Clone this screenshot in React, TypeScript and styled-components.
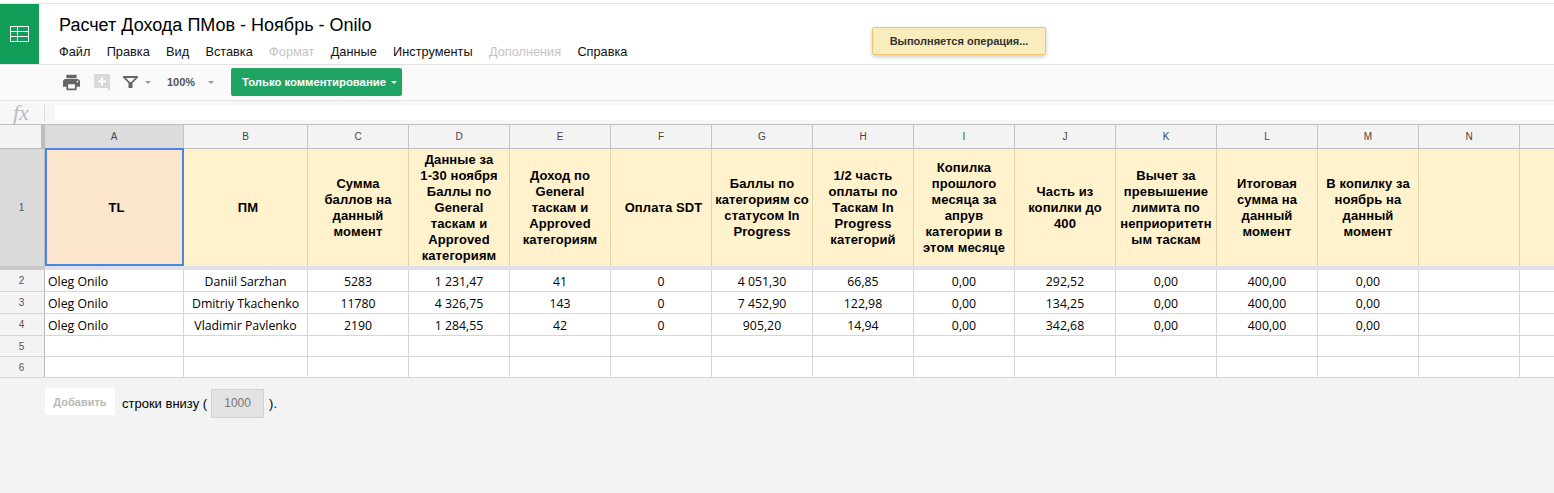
import React from "react";
import styled, { createGlobalStyle } from "styled-components";

const Global = createGlobalStyle`
  html, body { margin: 0; padding: 0; background: #f3f3f3; overflow: hidden; }
  * { box-sizing: border-box; }
`;

const Page = styled.div`
  width: 1554px; height: 493px; overflow: hidden; position: relative;
  font-family: "Liberation Sans", Arial, sans-serif; color: #000; background: #f3f3f3;
`;
const TopStrip = styled.div`height: 4px; background: #fff; border-bottom: 1px solid #e3e3e3;`;
const Header = styled.header`display: flex; height: 61px; background: #fff; border-bottom: 1px solid #e2e2e2;`;
const Logo = styled.div`width: 39px; height: 60px; background: #0f9d58; display: flex; align-items: center; justify-content: center; flex: none;`;
const TitleBlock = styled.div`padding-left: 20px; display: flex; flex-direction: column;`;
const Title = styled.div`font-size: 18px; line-height: 22px; margin-top: 10px; white-space: nowrap;`;
const Menu = styled.nav`display: flex; gap: 16.3px; margin-top: 8px; font-size: 12.75px; line-height: 15px;`;
const MenuItem = styled.span<{ $off?: boolean }>`color: ${p => (p.$off ? "#c4c4c4" : "#111")}; white-space: nowrap;`;
const Toast = styled.div`
  position: absolute; left: 872px; top: 27px; width: 174px; height: 28px;
  background: #f9edbe; border: 1px solid #f0c36d; border-radius: 2px;
  box-shadow: 0 2px 4px rgba(0,0,0,.2); font: bold 11px/26px "Liberation Sans", Arial, sans-serif;
  color: #333; text-align: center;
`;
const Toolbar = styled.div`display: flex; align-items: center; height: 36px; background: #fafafa; border-bottom: 1px solid #e2e2e2; padding: 0 0 1px 63px;`;
const IconSlot = styled.span<{ $w: number; $ml?: number }>`display: flex; align-items: center; width: ${p => p.$w}px; margin-left: ${p => p.$ml ?? 0}px; flex: none;`;
const Caret = styled.span<{ $color?: string; $ml: number }>`
  width: 0; height: 0; border-left: 3px solid transparent; border-right: 3px solid transparent;
  border-top: 3px solid ${p => p.$color ?? "#999"}; margin-left: ${p => p.$ml}px; flex: none;
`;
const Zoom = styled.span`font-size: 11px; font-weight: bold; color: #555; margin-left: 16px; width: 27px; white-space: nowrap;`;
const GreenButton = styled.div`
  display: flex; align-items: center; height: 28px; width: 171px; margin-left: 17px; padding-left: 11px;
  background: #1fa463; border-radius: 2px; color: #fff; font-size: 11.3px; font-weight: bold; white-space: nowrap;
`;
const FormulaBar = styled.div`display: flex; align-items: center; height: 23px; background: #f7f7f7;`;
const Fx = styled.span`width: 44px; padding-left: 13px; font: italic 22px/20px "Liberation Serif", serif; color: #bbb; flex: none;`;
const FxSep = styled.span`width: 1px; height: 16px; background: #ddd; flex: none;`;
const FxInput = styled.div`flex: 1; height: 15px; margin-left: 10px; background: #fff;`;

const Sheet = styled.div`
  display: grid; width: 1640px; border-top: 1px solid #bdbdbd;
  grid-template-columns: 45px 139px 124px repeat(13, 101px);
  grid-template-rows: 24px 117px 4px 22px 22px 22px 21px 21px;
`;
const Corner = styled.div`background: #f3f3f3; border-right: 4px solid #bdbdbd; border-bottom: 1px solid #bdbdbd;`;
const ColHead = styled.div<{ $active?: boolean }>`
  display: flex; align-items: center; justify-content: center; font-size: 10px; color: #444;
  background: ${p => (p.$active ? "#dcdcdc" : "#f3f3f3")}; border-right: 1px solid #c4c4c4; border-bottom: 1px solid #bdbdbd;
`;
const RowHead = styled.div<{ $active?: boolean }>`
  display: flex; align-items: center; justify-content: center; font-size: 10px; color: #555; padding-right: 1px;
  background: ${p => (p.$active ? "#dadada" : "#f3f3f3")}; border-right: 1px solid #bbb; border-bottom: 1px solid ${p => (p.$active ? "#dadada" : "#d5d5d5")};
`;
const HeadCell = styled.div<{ $selected?: boolean; $shift?: boolean }>`
  display: flex; align-items: center; justify-content: center; text-align: center;
  padding: 0 3px 0 ${p => (p.$shift ? "8px" : "3px")};
  font-size: 13px; line-height: 16px; font-weight: bold; letter-spacing: .1px; color: #000; position: relative;
  background: ${p => (p.$selected ? "#fce5cd" : "#fff2cc")}; border-right: 1px solid #e5d3a8;
  ${p => p.$selected && "outline: 2px solid #4a86e8; outline-offset: -2px; margin-top: -1px; padding-top: 1px; z-index: 1;"}
`;
const FreezeBar = styled.div`grid-column: 1 / -1; display: grid; grid-template-columns: 45px 1fr;`;
const FreezeHead = styled.div`background: #c9c9c9;`;
const FreezeLine = styled.div`background: #dfe1e8;`;
const DataCell = styled.div<{ $left?: boolean }>`
  display: flex; align-items: center; justify-content: ${p => (p.$left ? "flex-start" : "center")};
  padding: 1px 3px 0; font-family: "Open Sans", sans-serif; font-size: 12.3px; color: #000; white-space: nowrap;
  background: #fff; border-right: 1px solid #d5d5d5; border-bottom: 1px solid #d5d5d5;
`;
const Footer = styled.div`display: flex; align-items: center; height: 30px; margin-top: 10px; padding-left: 45px; font-size: 13px;`;
const AddButton = styled.div`
  width: 70px; height: 27px; background: #fff; color: #b8b8b8; font-size: 11px; font-weight: bold;
  display: flex; align-items: center; justify-content: center; margin: -3px 7px 0 0;
`;
const CountBox = styled.div`
  width: 53px; height: 29px; background: #e3e3e3; border: 1px solid #d3d3d3; color: #777; font-size: 12px;
  display: flex; align-items: center; justify-content: center; margin: 0 5px 0 4px;
`;

const columns = "ABCDEFGHIJKLMNO".split("");
const headers = [
  "TL", "ПМ", "Сумма баллов на данный момент",
  "Данные за 1-\u206030 ноября Баллы по General таскам и Approved категориям",
  "Доход по General таскам и Approved категориям", "Оплата SDT",
  "Баллы по категориям со статусом In Progress", "1/2 часть оплаты по Таскам In Progress категорий",
  "Копилка прошлого месяца за апрув категории в этом месяце", "Часть из копилки до 400",
  "Вычет за превышение лимита по неприоритетн ым таскам", "Итоговая сумма на данный момент",
  "В копилку за ноябрь на данный момент", "", "",
];
const rows = [
  ["Oleg Onilo", "Daniil Sarzhan", "5283", "1 231,47", "41", "0", "4 051,30", "66,85", "0,00", "292,52", "0,00", "400,00", "0,00", "", ""],
  ["Oleg Onilo", "Dmitriy Tkachenko", "11780", "4 326,75", "143", "0", "7 452,90", "122,98", "0,00", "134,25", "0,00", "400,00", "0,00", "", ""],
  ["Oleg Onilo", "Vladimir Pavlenko", "2190", "1 284,55", "42", "0", "905,20", "14,94", "0,00", "342,68", "0,00", "400,00", "0,00", "", ""],
  Array(15).fill(""),
  Array(15).fill(""),
];
const menu: [string, boolean?][] = [
  ["Файл"], ["Правка"], ["Вид"], ["Вставка"], ["Формат", true], ["Данные"], ["Инструменты"], ["Дополнения", true], ["Справка"],
];

export default function App() {
  return (
    <Page>
      <Global />
      <TopStrip />
      <Header>
        <Logo>
          <svg width="20" height="17" viewBox="0 0 20 17" fill="none" stroke="#fff" strokeWidth="1">
            <rect x=".5" y=".5" width="18" height="15" />
            <path d="M.5 5.5h18M.5 10.500h18M7.500 .5v15" />
          </svg>
        </Logo>
        <TitleBlock>
          <Title>Расчет Дохода ПМов - Ноябрь - Onilo</Title>
          <Menu>
            {menu.map(([m, off]) => <MenuItem key={m} $off={off}>{m}</MenuItem>)}
          </Menu>
        </TitleBlock>
      </Header>
      <Toast>Выполняется операция...</Toast>
      <Toolbar>
        <IconSlot $w={17}>
          <svg width="17" height="17" viewBox="2 2 20 20" fill="#666">
            <path d="M19 8H5c-1.660 0-3 1.340-3 3v6h4v4h12v-4h4v-6c0-1.660-1.340-3-3-3zm-3 11H8v-5h8v5zm3-7c-.55 0-1-.45-1-1s.45-1 1-1 1 .45 1 1-.45 1-1 1zm-1-9H6v4h12V3z" />
          </svg>
        </IconSlot>
        <IconSlot $w={17} $ml={14}>
          <svg width="17" height="17" viewBox="0 0 17 17">
            <path d="M0 0h16v14h0v3l-3-3H0z" fill="#d9d9d9" />
            <path d="M7 3.500h2v3h3v2H9v3H7v-3H4v-2h3z" fill="#fff" />
          </svg>
        </IconSlot>
        <IconSlot $w={15} $ml={12}>
          <svg width="15" height="12" viewBox="0 0 15 12" fill="#666">
            <path d="M0 0h15v1.500L9.500 7v5h-4V7L0 1.500zM3 2l3.800 4h1.400L12 2z" />
          </svg>
        </IconSlot>
        <Caret $ml={7} />
        <Zoom>100%</Zoom>
        <Caret $ml={14} />
        <GreenButton>
          Только комментирование
          <Caret $color="#fff" $ml={5} />
        </GreenButton>
      </Toolbar>
      <FormulaBar>
        <Fx>fx</Fx>
        <FxSep />
        <FxInput />
      </FormulaBar>
      <Sheet>
        <Corner />
        {columns.map((c, i) => <ColHead key={c} $active={i === 0}>{c === "O" ? "" : c}</ColHead>)}
        <RowHead $active>1</RowHead>
        {headers.map((h, i) => <HeadCell key={i} $selected={i === 0} $shift={i < 2 || i === 5}>{h}</HeadCell>)}
        <FreezeBar><FreezeHead /><FreezeLine /></FreezeBar>
        {rows.map((r, ri) => (
          <React.Fragment key={ri}>
            <RowHead>{ri + 2}</RowHead>
            {r.map((v, ci) => <DataCell key={ci} $left={ci === 0}>{v}</DataCell>)}
          </React.Fragment>
        ))}
      </Sheet>
      <Footer>
        <AddButton>Добавить</AddButton>
        строки внизу (
        <CountBox>1000</CountBox>
        ).
      </Footer>
    </Page>
  );
}
